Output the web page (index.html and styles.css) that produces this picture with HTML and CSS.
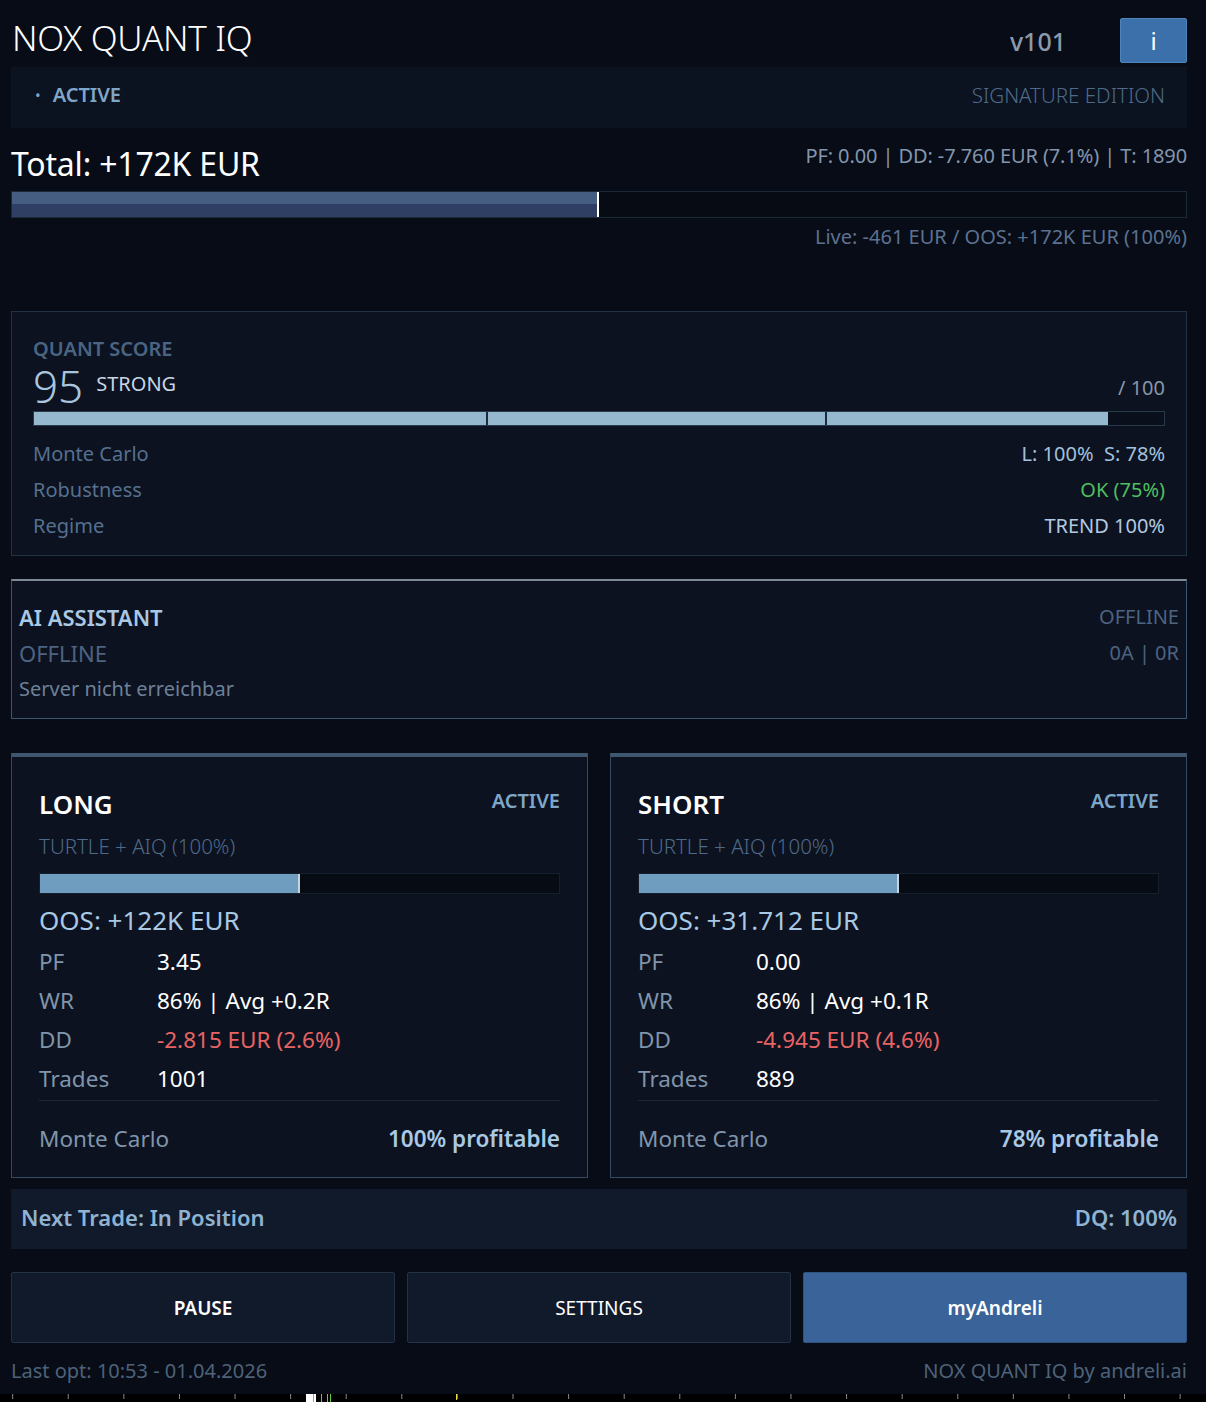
FILE: index.html
```html
<!DOCTYPE html>
<html lang="de">
<head>
<meta charset="utf-8">
<title>NOX QUANT IQ</title>
<link rel="stylesheet" href="styles.css">
</head>
<body>
<div class="app">
  <header class="top">
    <h1 class="title">NOX QUANT IQ</h1>
    <span class="version">v101</span>
    <button class="info-btn">i</button>
  </header>

  <div class="status-strip">
    <div class="status-left"><span class="dot">•</span><span class="status-active">ACTIVE</span></div>
    <div class="edition">SIGNATURE EDITION</div>
  </div>

  <div class="total-row">
    <div class="total">Total: +172K EUR</div>
    <div class="total-meta">PF: 0.00 | DD: -7.760 EUR (7.1%) | T: 1890</div>
  </div>
  <div class="total-bar"><div class="total-fill" style="width:50%"></div></div>
  <div class="live">Live: -461 EUR / OOS: +172K EUR (100%)</div>

  <section class="card quant">
    <div class="quant-label">QUANT SCORE</div>
    <div class="score-row">
      <div class="score-left"><span class="score">95</span><span class="score-word">STRONG</span></div>
      <span class="score-max">/ 100</span>
    </div>
    <div class="score-bar">
      <div class="score-fill" style="width:95%"></div>
      <span class="score-div d1"></span>
      <span class="score-div d2"></span>
    </div>
    <div class="kv-list">
      <div class="kv"><span class="k">Monte Carlo</span><span class="v blue">L: 100%&nbsp;&nbsp;S: 78%</span></div>
      <div class="kv"><span class="k">Robustness</span><span class="v green">OK (75%)</span></div>
      <div class="kv"><span class="k">Regime</span><span class="v trend">TREND 100%</span></div>
    </div>
  </section>

  <section class="card ai">
    <div class="ai-left">
      <div class="ai-title">AI ASSISTANT</div>
      <div class="ai-state">OFFLINE</div>
      <div class="ai-msg">Server nicht erreichbar</div>
    </div>
    <div class="ai-right">
      <div class="ai-r1">OFFLINE</div>
      <div class="ai-r2">0A | 0R</div>
    </div>
  </section>

  <div class="sides">
    <section class="side">
      <div class="side-head"><span class="side-name">LONG</span><span class="side-status">ACTIVE</span></div>
      <div class="side-strat">TURTLE + AIQ (100%)</div>
      <div class="side-bar"><div class="side-fill" style="width:50%"></div></div>
      <div class="oos">OOS: +122K EUR</div>
      <div class="stats">
        <div class="stat"><span class="sk">PF</span><span class="sv">3.45</span></div>
        <div class="stat"><span class="sk">WR</span><span class="sv">86% | Avg +0.2R</span></div>
        <div class="stat"><span class="sk">DD</span><span class="sv red">-2.815 EUR (2.6%)</span></div>
        <div class="stat"><span class="sk">Trades</span><span class="sv">1001</span></div>
      </div>
      <div class="mc"><span class="mck">Monte Carlo</span><span class="mcv">100% profitable</span></div>
    </section>
    <section class="side">
      <div class="side-head"><span class="side-name">SHORT</span><span class="side-status">ACTIVE</span></div>
      <div class="side-strat">TURTLE + AIQ (100%)</div>
      <div class="side-bar"><div class="side-fill" style="width:50%"></div></div>
      <div class="oos">OOS: +31.712 EUR</div>
      <div class="stats">
        <div class="stat"><span class="sk">PF</span><span class="sv">0.00</span></div>
        <div class="stat"><span class="sk">WR</span><span class="sv">86% | Avg +0.1R</span></div>
        <div class="stat"><span class="sk">DD</span><span class="sv red">-4.945 EUR (4.6%)</span></div>
        <div class="stat"><span class="sk">Trades</span><span class="sv">889</span></div>
      </div>
      <div class="mc"><span class="mck">Monte Carlo</span><span class="mcv">78% profitable</span></div>
    </section>
  </div>

  <div class="next">
    <span>Next Trade: In Position</span>
    <span>DQ: 100%</span>
  </div>

  <div class="buttons">
    <button class="btn btn-pause">PAUSE</button>
    <button class="btn btn-settings">SETTINGS</button>
    <button class="btn btn-primary">myAndreli</button>
  </div>

  <footer class="foot">
    <span>Last opt: 10:53 - 01.04.2026</span>
    <span>NOX QUANT IQ by andreli.ai</span>
  </footer>
</div>
<div class="axis">
  <span class="mk mk-white"></span>
  <span class="mk mk-g1"></span>
  <span class="mk mk-g2"></span>
  <span class="mk mk-g3"></span>
  <span class="mk mk-g4"></span>
  <span class="mk mk-y"></span>
</div>
</body>
</html>
```

FILE: styles.css
```css
* { box-sizing: border-box; }
html, body {
  margin: 0;
  padding: 0;
  background: #070c17;
  font-family: "Noto Sans", "Open Sans", sans-serif;
  color: #c8d6e4;
}
.app {
  width: 1176px;
  margin-left: 11px;
}
.top {
  height: 67px;
  display: flex;
  align-items: center;
}
.title {
  margin: 0;
  flex: 1;
  font-size: 35px;
  font-weight: 300;
  color: #ffffff;
  line-height: 40px;
  letter-spacing: -0.3px;
  padding-left: 1px;
  margin-top: 9px;
}
.version {
  font-size: 25px;
  font-weight: 500;
  color: #8c9aab;
  margin-right: 54px;
  margin-top: 14px;
}
.info-btn {
  width: 67px;
  height: 45px;
  margin-top: 14px;
  background: #3b70aa;
  border: 1px solid #4f85bd;
  border-radius: 2px;
  color: #ffffff;
  font-family: inherit;
  font-size: 24px;
  padding: 0;
}
.status-strip {
  height: 61px;
  background: #0b1220;
  display: flex;
  align-items: center;
  justify-content: space-between;
  padding: 0 22px 6px 22px;
  font-size: 20px;
}
.status-left { display: flex; align-items: center; }
.dot { color: #7fa6c8; font-size: 15px; margin-right: 12px; margin-left: 2px; }
.status-active { color: #7fa6c8; font-weight: 600; }
.edition { color: #4f6a88; font-weight: 300; font-size: 20.5px; }

.total-row {
  margin-top: 18px;
  display: flex;
  justify-content: space-between;
  align-items: flex-start;
}
.total {
  font-size: 32px;
  line-height: 36px;
  color: #ffffff;
  font-weight: 400;
  letter-spacing: -0.2px;
}
.total-meta {
  font-size: 20px;
  line-height: 24px;
  color: #8396ad;
  margin-top: -2px;
  letter-spacing: -0.1px;
}
.total-bar {
  margin-top: 9px;
  height: 27px;
  border: 1px solid #1c2838;
  background: #070b14;
}
.total-fill {
  height: 100%;
  background: linear-gradient(#455d80 0 50%, #2f3e63 50% 100%);
  border-right: 2px solid #ffffff;
}
.live {
  text-align: right;
  font-size: 20px;
  line-height: 24px;
  margin-top: 7px;
  color: #5c7290;
}

.card {
  background: #0c1220;
}
.quant {
  margin-top: 62px;
  border: 1px solid #1f3345;
  padding: 24px 21px 11px 21px;
}
.quant-label {
  font-size: 20px;
  line-height: 26px;
  font-weight: 600;
  color: #4a6582;
}
.score-row {
  height: 48px;
  display: flex;
  align-items: center;
  justify-content: space-between;
}
.score-left { display: flex; align-items: center; }
.score {
  font-size: 44px;
  font-weight: 300;
  color: #a9c6de;
  line-height: 48px;
}
.score-word {
  font-size: 20px;
  color: #c8d6e4;
  margin-left: 13px;
  margin-top: -6px;
}
.score-max {
  font-size: 20px;
  color: #8796a8;
  margin-top: 2px;
}
.score-bar {
  position: relative;
  height: 15px;
  margin-top: 1px;
  border: 1px solid #263a4c;
  background: #0a101b;
}
.score-fill {
  height: 100%;
  background: #95b8cf;
}
.score-div {
  position: absolute;
  top: 0;
  bottom: 0;
  width: 2px;
  background: #1c2b3c;
}
.d1 { left: 40%; }
.d2 { left: 70%; }
.kv-list { margin-top: 10px; }
.kv {
  display: flex;
  justify-content: space-between;
  line-height: 36px;
  font-size: 20px;
}
.k { color: #55708e; }
.v.blue { color: #a3c0dc; }
.v.green { color: #4fbf5f; }
.v.trend { color: #b2cae0; }

.ai {
  margin-top: 23px;
  border: 1px solid #3b566f;
  border-top: 2px solid #7c8896;
  padding: 18px 7px 10px 7px;
  display: flex;
  justify-content: space-between;
  height: 140px;
}
.ai-left div, .ai-right div { line-height: 36px; }
.ai-title { font-size: 22px; font-weight: 600; color: #a9c8e4; }
.ai-state { font-size: 22px; color: #4d6480; }
.ai-msg { font-size: 20px; color: #6c8199; }
.ai-right { text-align: right; font-size: 20px; color: #4d6480; }

.sides {
  margin-top: 34px;
  display: grid;
  grid-template-columns: 577px 577px;
  column-gap: 22px;
}
.side {
  background: #0c1220;
  border: 1px solid #344a60;
  border-top: 4px solid #3e566e;
  padding: 29px 27px 16px 27px;
  height: 425px;
}
.side-head {
  display: flex;
  justify-content: space-between;
  align-items: center;
  height: 36px;
}
.side-name { font-size: 26px; font-weight: 600; color: #ffffff; }
.side-status { font-size: 20px; font-weight: 600; color: #7ea6c8; margin-top: -8px; }
.side-strat {
  margin-top: 9px;
  line-height: 30px;
  font-size: 20.5px;
  font-weight: 300;
  color: #4e6a88;
}
.side-bar {
  margin-top: 12px;
  height: 21px;
  border: 1px solid #151f2e;
  background: #070b14;
}
.side-fill {
  height: 100%;
  background: #6f9dc0;
  border-right: 2px solid #c8d2dc;
}
.oos {
  margin-top: 8px;
  line-height: 36px;
  font-size: 26px;
  color: #a9c8e4;
}
.stats { margin-top: 4px; }
.stat {
  display: flex;
  line-height: 39px;
  font-size: 22.5px;
}
.sk { width: 118px; color: #8095ab; }
.sv { color: #ffffff; }
.sv.red { color: #e86464; }
.mc {
  margin-top: 2px;
  border-top: 1px solid #1c2838;
  padding-top: 20px;
  display: flex;
  justify-content: space-between;
  line-height: 36px;
  font-size: 22.5px;
}
.mck { color: #8095ab; }
.mcv { color: #a9c8e4; font-weight: 600; }

.next {
  margin-top: 11px;
  height: 60px;
  background: #111a2b;
  display: flex;
  justify-content: space-between;
  align-items: center;
  padding: 0 10px 5px 10px;
  font-size: 22px;
  font-weight: 600;
  color: #8fb3d0;
}
.buttons {
  margin-top: 23px;
  display: grid;
  grid-template-columns: 1fr 1fr 1fr;
  column-gap: 12px;
}
.btn {
  height: 71px;
  background: #111a2b;
  border: 1px solid #233244;
  border-radius: 2px;
  color: #ffffff;
  font-family: inherit;
  font-size: 19px;
}
.btn-pause { font-weight: 600; }
.btn-settings { font-weight: 400; }
.btn-primary { background: #3a6499; border-color: #2f5480; font-weight: 600; }

.foot {
  margin-top: 16px;
  display: flex;
  justify-content: space-between;
  line-height: 24px;
  font-size: 20px;
  color: #4e6279;
}
.axis {
  position: relative;
  margin-top: 11px;
  height: 9px;
  background: #000000 repeating-linear-gradient(90deg, transparent 0 34px, #8a8a8a 34px 35px, transparent 35px 55.6px);
  background-size: 55.6px 5px;
  background-repeat: repeat-x;
  background-position: 34px 0;
}
.mk { position: absolute; top: 0; width: 1px; height: 9px; }
.mk-white { left: 306px; width: 10px; background: #ffffff; }
.mk-g1 { left: 321px; background: #6acc3a; }
.mk-g2 { left: 330px; background: #6acc3a; }
.mk-g3 { left: 313px; background: #6acc3a; }
.mk-g4 { left: 327px; background: #6acc3a; }
.mk-y { left: 456px; background: #e6d64a; height: 6px; }
```
